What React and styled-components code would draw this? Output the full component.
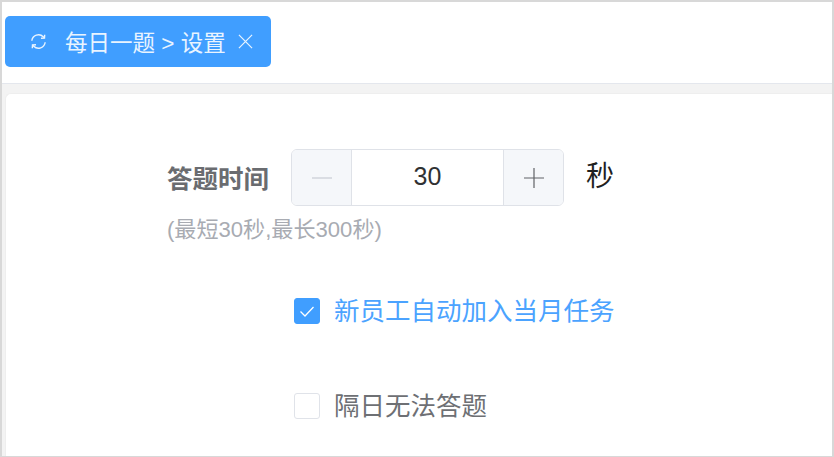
import styled, { createGlobalStyle } from 'styled-components';

const GlobalStyle = createGlobalStyle`
  html, body {
    margin: 0;
    padding: 0;
    background: #fff;
  }
  body {
    font-family: "Liberation Sans", Arial, "Noto Sans CJK SC", sans-serif;
  }
`;

function App() {
  return (
    <>
      <GlobalStyle />
      <Frame>
        <Header>
          <Tab>
            <TabIcon viewBox="0 0 20 20">
              <path d="M3 9.2a7.1 7.1 0 0 1 12-4.3l1.2 1.3" />
              <path d="M17 10.8a7.1 7.1 0 0 1-12 4.3l-1.2-1.3" />
              <path d="M12.6 6.5l3.7-.1.2-3.5" />
              <path d="M7.4 13.5l-3.7.1-.2 3.5" />
            </TabIcon>
            <TabTitle>每日一题 &gt; 设置</TabTitle>
            <TabClose viewBox="0 0 16 16">
              <path d="M1 1l14 14M15 1L1 15" />
            </TabClose>
          </Tab>
        </Header>
        <Content>
          <Card>
            <TimeRow>
              <TimeLabel>答题时间</TimeLabel>
              <NumberInput>
                <StepButton>
                  <StepIcon viewBox="0 0 20 20" $muted>
                    <path d="M0 10h20" />
                  </StepIcon>
                </StepButton>
                <NumberValue>30</NumberValue>
                <StepButton $right>
                  <StepIcon viewBox="0 0 20 20">
                    <path d="M0 10h20M10 0v20" />
                  </StepIcon>
                </StepButton>
              </NumberInput>
              <Unit>秒</Unit>
            </TimeRow>
            <Hint>(最短30秒,最长300秒)</Hint>
            <CheckRow>
              <CheckBox $checked>
                <svg width="16" height="13" viewBox="0 0 16 13" fill="none" stroke="#fff" strokeWidth="1.3">
                  <path d="M1.5 6.5l4.5 4.5 8.5-9" />
                </svg>
              </CheckBox>
              <CheckText $checked>新员工自动加入当月任务</CheckText>
            </CheckRow>
            <CheckRow $second>
              <CheckBox />
              <CheckText>隔日无法答题</CheckText>
            </CheckRow>
          </Card>
        </Content>
      </Frame>
    </>
  );
}

const Frame = styled.div`
  box-sizing: border-box;
  width: 834px;
  height: 457px;
  overflow: hidden;
  display: flex;
  flex-direction: column;
  border: 2px solid #d8d8d8;
  border-bottom-width: 1px;
  background: #f3f3f3;
`;

const Header = styled.div`
  box-sizing: border-box;
  height: 82px;
  flex: none;
  padding: 14px 0 0 3px;
  background: #fff;
  border-bottom: 1px solid #e4e7ed;
`;

const Tab = styled.div`
  box-sizing: border-box;
  width: 266px;
  height: 51px;
  display: flex;
  align-items: center;
  padding-left: 24px;
  border-radius: 5px;
  background: #409eff;
  color: #e9f4ff;
`;

const TabIcon = styled.svg`
  width: 19px;
  height: 19px;
  flex: none;
  fill: none;
  stroke: #e9f4ff;
  stroke-width: 1.5;
`;

const TabTitle = styled.span`
  margin-left: 17px;
  margin-top: 4px;
  font-size: 22.5px;
  line-height: 26px;
  white-space: nowrap;
`;

const TabClose = styled.svg`
  width: 15px;
  height: 15px;
  margin-left: 12px;
  flex: none;
  fill: none;
  stroke: #e9f4ff;
  stroke-width: 1.3;
`;

const Content = styled.div`
  flex: 1;
  min-height: 0;
  padding: 9px 0 0 3px;
`;

const Card = styled.div`
  box-sizing: border-box;
  height: 100%;
  padding: 55px 0 0 161px;
  background: #fff;
  border: 1px solid #eeeeee;
  border-bottom: none;
  border-right: none;
  border-radius: 6px 0 0 0;
`;

const TimeRow = styled.div`
  display: flex;
  align-items: center;
`;

const TimeLabel = styled.div`
  width: 124px;
  flex: none;
  font-size: 25.5px;
  font-weight: 700;
  color: #6a6c70;
  margin-top: -3px;
`;

const NumberInput = styled.div`
  box-sizing: border-box;
  width: 273px;
  height: 57px;
  display: flex;
  border: 1px solid #dfe2e8;
  border-radius: 6px;
  overflow: hidden;
`;

const StepButton = styled.div`
  width: 59px;
  flex: none;
  display: flex;
  align-items: center;
  justify-content: center;
  background: #f5f7fa;
  border-right: ${(p) => (p.$right ? 'none' : '1px solid #dfe2e8')};
  border-left: ${(p) => (p.$right ? '1px solid #dfe2e8' : 'none')};
`;

const StepIcon = styled.svg`
  width: 20px;
  height: 20px;
  fill: none;
  stroke: ${(p) => (p.$muted ? '#c0c4cc' : '#606266')};
  stroke-width: 1.2;
`;

const NumberValue = styled.div`
  flex: 1;
  text-align: center;
  align-self: center;
  font-size: 25px;
  line-height: 30px;
  color: #303133;
  margin-top: -4px;
`;

const Unit = styled.div`
  margin-left: 22px;
  font-size: 28px;
  line-height: 34px;
  color: #1f1f1f;
  margin-top: -2px;
`;

const Hint = styled.div`
  margin-top: 10px;
  font-size: 22.1px;
  line-height: 28px;
  color: #a8abb2;
`;

const CheckRow = styled.div`
  display: flex;
  align-items: center;
  margin-left: 127px;
  margin-top: ${(p) => (p.$second ? '65px' : '52px')};
`;

const CheckBox = styled.div`
  box-sizing: border-box;
  width: 26px;
  height: 26px;
  flex: none;
  display: flex;
  align-items: center;
  justify-content: center;
  border-radius: 3px;
  border: 1px solid ${(p) => (p.$checked ? '#409eff' : '#e0e3e9')};
  background: ${(p) => (p.$checked ? '#409eff' : '#fff')};
`;

const CheckText = styled.span`
  margin-left: 14px;
  font-size: 25.5px;
  line-height: 30px;
  white-space: nowrap;
  color: ${(p) => (p.$checked ? '#4ba3ff' : '#6e7074')};
`;

export default App;
